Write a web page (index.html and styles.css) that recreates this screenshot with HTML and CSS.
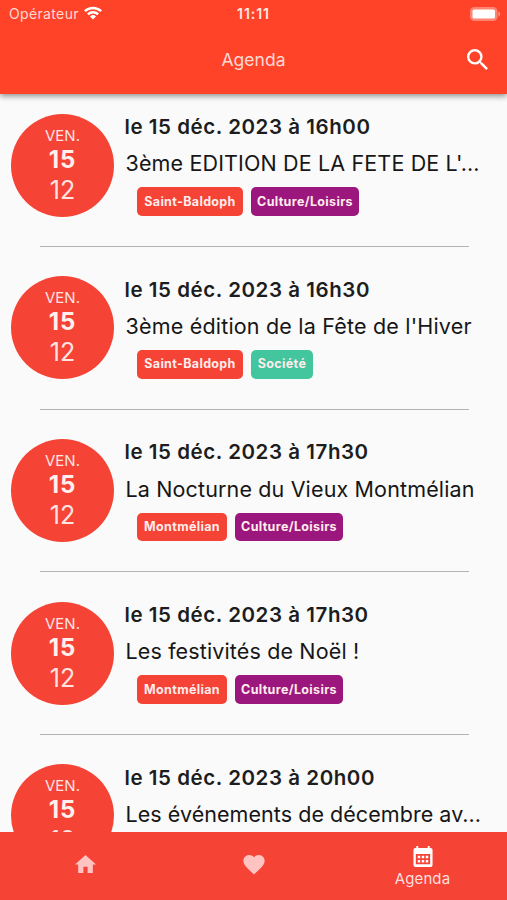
FILE: index.html
```html
<!DOCTYPE html>
<html lang="fr">
<head>
<meta charset="utf-8">
<title>Agenda</title>
<link rel="stylesheet" href="styles.css">
</head>
<body>
<div class="app">
  <header class="header">
    <div class="status">
      <div class="carrier"><span>Opérateur</span>
        <svg class="wifi" viewBox="0 0 18 14"><path d="M0 4.300a13 13 0 0 1 18 0l-1.700 1.800a10.500 10.500 0 0 0-14.600 0z"/><path d="M3 7.400a8.600 8.600 0 0 1 12 0l-1.800 1.800a6 6 0 0 0-8.400 0z"/><path d="M6 10.500a4.300 4.300 0 0 1 6 0l-3 3.100z"/></svg>
      </div>
      <div class="clock">11:11</div>
      <svg class="battery" viewBox="0 0 31 14"><rect width="27.500" height="14" rx="4.300" fill-opacity=".35"/><rect x="2.500" y="2.500" width="22.500" height="9" rx="1.500"/><path d="M28.500 4.600c2 .8 2 4 0 4.800z" fill-opacity=".5"/></svg>
    </div>
    <div class="toolbar">
      <h1>Agenda</h1>
      <svg class="search" viewBox="3 3 17.5 17.5"><path d="M15.500 14h-.79l-.28-.27A6.471 6.471 0 0 0 16 9.500 6.500 6.500 0 1 0 9.500 16c1.610 0 3.090-.59 4.230-1.570l.27.28v.79l5 4.990L20.490 19l-4.990-5zm-6 0C7.010 14 5 11.990 5 9.500S7.010 5 9.500 5 14 7.010 14 9.500 11.990 14 9.500 14z"/></svg>
    </div>
  </header>
  <main class="list">
    <article class="event">
      <div class="badge"><span class="dow">VEN.</span><b>15</b><span class="month">12</span></div>
      <div class="info"><h2>le 15 déc. 2023 à 16h00</h2><p>3ème EDITION DE LA FETE DE L'...</p>
        <div class="tags"><span class="tag baldoph">Saint-Baldoph</span><span class="tag culture">Culture/Loisirs</span></div></div>
    </article>
    <article class="event">
      <div class="badge"><span class="dow">VEN.</span><b>15</b><span class="month">12</span></div>
      <div class="info"><h2>le 15 déc. 2023 à 16h30</h2><p class="looser">3ème édition de la Fête de l'Hiver</p>
        <div class="tags"><span class="tag baldoph">Saint-Baldoph</span><span class="tag society">Société</span></div></div>
    </article>
    <article class="event">
      <div class="badge"><span class="dow">VEN.</span><b>15</b><span class="month">12</span></div>
      <div class="info"><h2>le 15 déc. 2023 à 17h30</h2><p>La Nocturne du Vieux Montmélian</p>
        <div class="tags"><span class="tag montmelian">Montmélian</span><span class="tag culture">Culture/Loisirs</span></div></div>
    </article>
    <article class="event">
      <div class="badge"><span class="dow">VEN.</span><b>15</b><span class="month">12</span></div>
      <div class="info"><h2>le 15 déc. 2023 à 17h30</h2><p>Les festivités de Noël !</p>
        <div class="tags"><span class="tag montmelian">Montmélian</span><span class="tag culture">Culture/Loisirs</span></div></div>
    </article>
    <article class="event">
      <div class="badge"><span class="dow">VEN.</span><b>15</b><span class="month">12</span></div>
      <div class="info"><h2>le 15 déc. 2023 à 20h00</h2><p class="tighter">Les événements de décembre av...</p></div>
    </article>
  </main>
  <nav class="nav">
    <a class="tab"><svg class="home" viewBox="2 3 20 17"><path d="M10 20v-6h4v6h5v-8h3L12 3 2 12h3v8z"/></svg></a>
    <a class="tab"><svg class="heart" viewBox="2 3 20 18.35"><path d="m12 21.350-1.450-1.320C5.400 15.360 2 12.280 2 8.500 2 5.420 4.420 3 7.500 3c1.740 0 3.410.81 4.500 2.090C13.090 3.810 14.760 3 16.500 3 19.580 3 22 5.420 22 8.500c0 3.780-3.400 6.860-8.550 11.540L12 21.350z"/></svg></a>
    <a class="tab active"><svg class="calendar" viewBox="0 0 20 22"><path fill-rule="evenodd" d="M3 0h2v2h10V0h2v2h1a2 2 0 0 1 2 2v16a2 2 0 0 1-2 2H2a2 2 0 0 1-2-2V4a2 2 0 0 1 2-2h1zM2.500 8.500v10.500h15V8.500z"/><path d="M4.500 10.200h2.600v2.600H4.500zm4.200 0h2.600v2.600H8.700zm4.200 0h2.600v2.600h-2.600zM4.500 14.600h2.600v2.600H4.500zm4.200 0h2.600v2.600H8.700zm4.200 0h2.600v2.600h-2.600z"/></svg><span>Agenda</span></a>
  </nav>
</div>
</body>
</html>
```
FILE: styles.css
```css
* { box-sizing: border-box; }
body { margin: 0; font-family: Inter, "Liberation Sans", sans-serif; background: #fafafa; color: #1d1d1d; }
svg { display: block; fill: currentColor; flex: none; }
h1, h2, p { margin: 0; font-weight: 400; }
.app { height: 900px; display: flex; flex-direction: column; overflow: hidden; }
.header { height: 94px; flex: none; background: #ff4329; color: #fff; box-shadow: 0 2px 6px rgba(0, 0, 0, .45); z-index: 1; }
.status { height: 27px; display: grid; grid-template-columns: 1fr auto 1fr; align-items: center; padding: 0 6px 0 9px; }
.carrier { display: flex; align-items: center; gap: 5.500px; font-size: 14px; line-height: 27px; letter-spacing: .35px; color: #ffd9d3; }
.wifi { width: 18px; height: 14px; color: #fff; position: relative; top: -1px; }
.clock { font-size: 14px; font-weight: 600; letter-spacing: .95px; color: #ffe7e3; margin-left: -3px; }
.battery { width: 31px; height: 14px; justify-self: end; }
.toolbar { height: 67px; display: grid; grid-template-columns: 1fr auto 1fr; align-items: center; padding: 0 19px 2px; }
.toolbar h1 { grid-column: 2; font-size: 17.500px; letter-spacing: .05px; color: #ffd9d3; }
.search { width: 21px; height: 21px; justify-self: end; }
.list { flex: 1; min-height: 0; overflow: hidden; padding-top: 19px; }
.event { height: 162.700px; display: flex; padding-left: 11px; background: linear-gradient(#b3b3b3, #b3b3b3) 39.500px 133px / 429px 1px no-repeat; }
.badge { width: 103px; height: 103px; margin-top: .5px; border-radius: 50%; background: #f54336; color: #ffe3e0; display: flex; flex-direction: column; align-items: center; padding-top: 13px; flex: none; }
.dow { font-size: 15px; line-height: 18px; }
.badge b { font-size: 24px; line-height: 30px; font-weight: 700; letter-spacing: .8px; color: #fff0ee; }
.month { font-size: 25px; line-height: 30px; }
.info { padding-left: 10.500px; white-space: nowrap; }
.info h2 { font-size: 20.500px; line-height: 28px; font-weight: 600; letter-spacing: .56px; }
.info p { font-size: 21.500px; line-height: 28px; margin-top: 8.400px; padding-left: 1px; letter-spacing: .14px; color: #161616; }
.info .looser { letter-spacing: .19px; }
.info .tighter { letter-spacing: .05px; }
.tags { display: flex; gap: 8px; padding-left: 12.500px; margin-top: 10px; }
.tag { height: 28.500px; border-radius: 5px; display: flex; align-items: center; justify-content: center; font-size: 12.500px; line-height: 15px; padding-bottom: 1px; font-weight: 700; color: #ffeceb; letter-spacing: .35px; background: #f54336; }
.baldoph { width: 106px; }
.montmelian { width: 90px; }
.culture { width: 108px; background: #9b177e; }
.society { width: 62px; background: #43c59e; }
.nav { height: 68.500px; flex: none; display: grid; grid-template-columns: repeat(3, 1fr); background: #f54336; z-index: 1; }
.tab { display: flex; flex-direction: column; align-items: center; padding-top: 23.500px; color: #ffc3c2; }
.home { width: 21px; height: 18px; margin-left: 1px; }
.heart { width: 22px; height: 19.500px; }
.active { padding-top: 14.500px; color: #fff; }
.calendar { width: 20px; height: 21px; }
.active span { font-size: 15px; line-height: 20px; margin-top: 2px; letter-spacing: .1px; color: #ffdfdc; }
```
